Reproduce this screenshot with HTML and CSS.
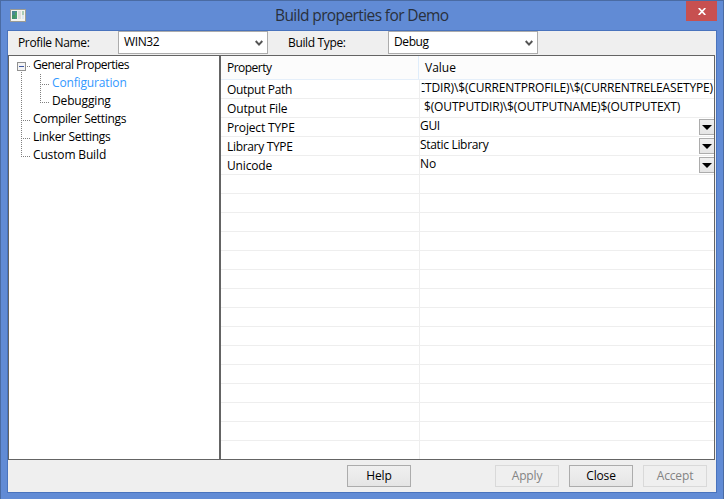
FILE: index.html
```html
<!DOCTYPE html>
<html lang="en">
<head>
<meta charset="utf-8">
<title>Build properties for Demo</title>
<link rel="stylesheet" href="styles.css">
</head>
<body>
<div class="window">
  <header class="titlebar">
    <svg class="app-icon" width="16" height="13" viewBox="0 0 16 13" shape-rendering="crispEdges">
      <rect width="16" height="13" fill="#9b9b94"/><rect x="1" y="1" width="14" height="11" fill="#f3f3ee"/>
      <rect x="2" y="2" width="5" height="8" fill="#4b8792"/><rect x="2" y="6" width="3" height="4" fill="#42936a"/><rect x="5" y="3" width="2" height="6" fill="#49a06c"/>
      <rect x="8" y="2" width="3" height="8" fill="#dcdedc"/><rect x="12" y="2" width="2" height="4" fill="#a9cbb6"/><rect x="12" y="6" width="2" height="4" fill="#dce6f2"/>
    </svg>
    <h1 class="title">Build properties for Demo</h1>
    <div class="close"><svg width="8" height="7" viewBox="0 0 8 7"><path d="M.7 0 7.3 7M7.3 0 .7 7" stroke="#fff" stroke-width="1.7"/></svg></div>
  </header>
  <main class="client">
    <div class="toolbar">
      <label class="label profile">Profile Name:</label>
      <div class="combo"><span>WIN32</span><svg width="8" height="7" viewBox="0 0 8 7"><path d="M.7 1 4 4.6 7.3 1" fill="none" stroke="#555" stroke-width="2"/></svg></div>
      <label class="label build">Build Type:</label>
      <div class="combo"><span>Debug</span><svg width="8" height="7" viewBox="0 0 8 7"><path d="M.7 1 4 4.6 7.3 1" fill="none" stroke="#555" stroke-width="2"/></svg></div>
    </div>
    <div class="panels">
      <nav class="tree">
        <svg class="lines" width="50" height="108" viewBox="0 0 50 108" shape-rendering="crispEdges">
          <g fill="none" stroke="#808080" stroke-dasharray="1 1">
            <path d="M12.500 16V101M31.500 18V47M14 64.500H21M14 82.500H21M14 100.500H21M33 28.500H40M33 46.500H40M18 10.500H21"/>
          </g>
          <rect x="8.500" y="6.500" width="8" height="8" fill="#f4f4f4" stroke="#919191"/>
          <path d="M10 10.500H15" stroke="#3b56a5"/>
        </svg>
        <ul>
          <li class="tight">General Properties</li>
          <li class="child selected">Configuration</li>
          <li class="child">Debugging</li>
          <li class="snug">Compiler Settings</li>
          <li class="snug">Linker Settings</li>
          <li>Custom Build</li>
        </ul>
      </nav>
      <section class="grid">
        <div class="head"><div class="name tight">Property</div><div class="value">Value</div></div>
        <div class="row"><div class="name snug">Output Path</div><div class="value edit end"><span>CTDIR)\$(CURRENTPROFILE)\$(CURRENTRELEASETYPE)</span></div></div>
        <div class="row"><div class="name">Output File</div><div class="value edit"><span>$(OUTPUTDIR)\$(OUTPUTNAME)$(OUTPUTEXT)</span></div></div>
        <div class="row"><div class="name">Project TYPE</div><div class="value snug"><span>GUI</span><i class="drop"></i></div></div>
        <div class="row"><div class="name snug">Library TYPE</div><div class="value snug"><span>Static Library</span><i class="drop"></i></div></div>
        <div class="row"><div class="name">Unicode</div><div class="value"><span>No</span><i class="drop"></i></div></div>
        <div class="empty"></div>
      </section>
    </div>
    <footer class="actions">
      <button class="help">Help</button>
      <button disabled>Apply</button>
      <button>Close</button>
      <button disabled>Accept</button>
    </footer>
  </main>
</div>
</body>
</html>
```

FILE: styles.css
```css
* { box-sizing: border-box; }
body { margin: 0; font: 12px/18px "Open Sans", "Noto Sans", sans-serif; font-stretch: 93%; letter-spacing: -0.15px; color: #000; }
span { white-space: nowrap; }
.snug { letter-spacing: -0.32px; }
.tight { letter-spacing: -0.52px; }
.window { width: 724px; height: 499px; background: #618bd5; border: 1px solid #4a6ba3; border-bottom: 0; padding: 0 6px 6px; display: flex; flex-direction: column; }
.titlebar { height: 29px; display: flex; align-items: flex-start; }
.app-icon { margin: 8px 0 0 3px; flex: none; }
.title { margin: 0; flex: 1; font-size: 15.5px; line-height: 28px; font-weight: 400; color: #29303c; padding-left: 249px; letter-spacing: -0.6px; }
.close { width: 31px; height: 20px; background: #c75050; display: flex; align-items: center; justify-content: center; }
.client { border: 1px solid #4973bd; background: #efefef; height: 463px; }
.toolbar { height: 24px; display: flex; }
.label { padding-left: 10px; width: 110px; line-height: 23px; letter-spacing: -0.35px; }
.build { width: 120px; padding-left: 20px; }
.combo { width: 150px; height: 23px; border: 1px solid #acacac; background: #fff; display: flex; justify-content: space-between; padding: 0 4px 0 5px; line-height: 19px; letter-spacing: -0.4px; }
.combo svg { margin-top: 8px; }
.panels { height: 405px; display: flex; margin-right: 1px; }
.tree { width: 212px; flex: none; background: #fff; border: 1px solid #646464; position: relative; }
.lines { position: absolute; left: 0; top: 0; }
ul { list-style: none; margin: 0; padding: 0; }
li { height: 18px; padding-left: 24px; line-height: 17px; }
.child { padding-left: 43px; }
.selected { color: #3399ff; }
.grid { flex: 1; min-width: 0; background: #fff; border: 1px solid #646464; display: flex; flex-direction: column; }
.head, .row { display: flex; }
.head { height: 24px; background: #fcfcfc; border-bottom: 1px solid #e5effa; line-height: 23px; }
.row { height: 19px; border-bottom: 1px solid #eee; line-height: 19px; flex: none; }
.name { width: 199px; flex: none; padding-left: 6px; border-right: 1px solid #eee; }
.head .name { width: 198px; border-color: #dfedfb; }
.head .value { padding-left: 6px; letter-spacing: 0; }
.row .value { line-height: 15px; }
.value { flex: 1; min-width: 0; display: flex; justify-content: space-between; overflow: hidden; }
.row .edit { padding: 0 0 0 4px; }
.row .end { padding-right: 1px; justify-content: flex-end; }
.end span { clip-path: inset(0 0 0 4px); }
.drop { width: 15px; height: 16px; margin-top: 1px; border: 1px solid #acacac; border-right: 0; background: linear-gradient(#f0f0f0, #e5e5e5); display: flex; align-items: center; justify-content: center; flex: none; }
.drop::before { content: ""; width: 0; border: 5px solid transparent; border-top-color: #000; border-bottom: 0; }
.empty { flex: 1; background: linear-gradient(#eee, #eee) 198px 0 / 1px 100% no-repeat, repeating-linear-gradient(transparent 0 18px, #eee 18px 19px); }
.actions { display: flex; padding: 5px 9px 0 339px; gap: 10px; }
button { width: 64px; height: 22px; padding: 0; border: 1px solid #acacac; background: linear-gradient(#f0f0f0, #e5e5e5); font: inherit; letter-spacing: inherit; line-height: 18px; color: #000; flex: none; }
button:disabled { background: #efefef; border-color: #d9d9d9; color: #838383; }
.help { margin-right: 74px; }
```
